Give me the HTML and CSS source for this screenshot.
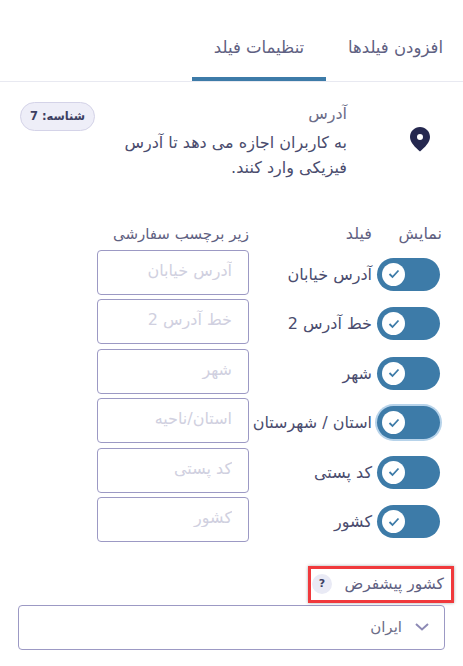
FILE: index.html
```
<!DOCTYPE html>
<html lang="fa" dir="rtl">
<head>
<meta charset="utf-8">
<title>تنظیمات فیلد</title>
<link rel="stylesheet" href="styles.css">
</head>
<body>
<nav class="tabs">
  <div class="tab">افزودن فیلدها</div>
  <div class="tab active">تنظیمات فیلد</div>
</nav>
<section class="info">
  <div class="pin">
    <svg width="20" height="25" viewBox="0 0 20 25"><path fill="#25284f" fill-rule="evenodd" d="M10 0C4.500 0 0 4.400 0 10c0 5.600 5.500 10.500 10 14.500C14.500 20.500 20 15.600 20 10 20 4.400 15.500 0 10 0Zm0 7a3 3 0 1 1 0 6 3 3 0 0 1 0-6Z"/></svg>
  </div>
  <div class="info-text">
    <div class="info-title">آدرس</div>
    <p class="info-desc">به کاربران اجازه می دهد تا آدرس فیزیکی وارد کنند.</p>
  </div>
  <div class="badge">شناسه: 7</div>
</section>
<section class="fields">
  <div class="head">
    <span class="h-show">نمایش</span>
    <span class="h-field">فیلد</span>
    <span class="h-sub">زیر برچسب سفارشی</span>
  </div>
  <div class="row">
    <span class="toggle"><span class="knob"><svg width="12" height="10" viewBox="0 0 12 10"><path d="M1.500 5l3 3 6-6.500" fill="none" stroke="#3d7ba8" stroke-width="1.800"/></svg></span></span>
    <span class="name">آدرس خیابان</span>
    <input class="sub" placeholder="آدرس خیابان">
  </div>
  <div class="row">
    <span class="toggle"><span class="knob"><svg width="12" height="10" viewBox="0 0 12 10"><path d="M1.500 5l3 3 6-6.500" fill="none" stroke="#3d7ba8" stroke-width="1.800"/></svg></span></span>
    <span class="name">خط آدرس 2</span>
    <input class="sub" placeholder="خط آدرس 2">
  </div>
  <div class="row">
    <span class="toggle"><span class="knob"><svg width="12" height="10" viewBox="0 0 12 10"><path d="M1.500 5l3 3 6-6.500" fill="none" stroke="#3d7ba8" stroke-width="1.800"/></svg></span></span>
    <span class="name">شهر</span>
    <input class="sub" placeholder="شهر">
  </div>
  <div class="row">
    <span class="toggle focus"><span class="knob"><svg width="12" height="10" viewBox="0 0 12 10"><path d="M1.500 5l3 3 6-6.500" fill="none" stroke="#3d7ba8" stroke-width="1.800"/></svg></span></span>
    <span class="name">استان / شهرستان</span>
    <input class="sub" placeholder="استان/ناحیه">
  </div>
  <div class="row">
    <span class="toggle"><span class="knob"><svg width="12" height="10" viewBox="0 0 12 10"><path d="M1.500 5l3 3 6-6.500" fill="none" stroke="#3d7ba8" stroke-width="1.800"/></svg></span></span>
    <span class="name">کد پستی</span>
    <input class="sub" placeholder="کد پستی">
  </div>
  <div class="row">
    <span class="toggle"><span class="knob"><svg width="12" height="10" viewBox="0 0 12 10"><path d="M1.500 5l3 3 6-6.500" fill="none" stroke="#3d7ba8" stroke-width="1.800"/></svg></span></span>
    <span class="name">کشور</span>
    <input class="sub" placeholder="کشور">
  </div>
</section>
<section class="country">
  <div class="label-wrap">
    <div class="label-box">
      <span class="label-text">کشور پیشفرض</span>
      <span class="help">?</span>
    </div>
  </div>
  <div class="select">
    <svg width="14" height="8" viewBox="0 0 14 8"><path d="M1 1l6 5.500L13 1" fill="none" stroke="#8d8ab5" stroke-width="2"/></svg>
    <span>ایران</span>
  </div>
</section>
</body>
</html>
```
FILE: styles.css
```
* { box-sizing: border-box; }
html, body { margin: 0; padding: 0; }
body {
  width: 463px;
  height: 666px;
  overflow: hidden;
  background: #fff;
  color: #4a4c6e;
  font-family: "DejaVu Sans", sans-serif;
  font-size: 16px;
}
.tabs {
  display: flex;
  height: 82px;
  padding-right: 20px;
  border-bottom: 1px solid #e8e9f1;
  color: #5f6182;
}
.tab {
  width: 134px;
  height: 81px;
  padding-top: 38px;
  font-size: 16.500px;
  text-align: center;
  white-space: nowrap;
  border-bottom: 4px solid transparent;
}
.tab:first-child { width: 117px; text-align: right; }
.tab.active { border-bottom-color: #3d7ba8; }
.info {
  display: flex;
  align-items: flex-start;
  height: 158px;
  padding: 20px 33px 0 20px;
}
.pin { flex: none; width: 20px; margin-top: 25px; margin-left: 63px; line-height: 0; }
.info-text { flex: none; width: 232px; }
.info-title { margin-top: 2px; color: #6c6d88; font-size: 16px; line-height: 20px; }
.info-desc { margin: 6px 0 0; color: #4a4c6e; font-size: 16px; line-height: 25px; }
.badge {
  margin-right: auto;
  width: 75px;
  height: 29px;
  border: 1px solid #d4d3e8;
  border-radius: 15px;
  background: #eeeef8;
  color: #3d3f62;
  font-size: 11.500px;
  font-weight: bold;
  line-height: 27px;
  text-align: center;
  white-space: nowrap;
}
.fields { padding-right: 23px; }
.head {
  display: flex;
  height: 23.600px;
  margin-top: -16px;
  margin-right: -2px;
  color: #5f6182;
  font-size: 16px;
  line-height: 20px;
  white-space: nowrap;
}
.h-show { flex: none; width: 70px; }
.h-field { flex: none; width: 123px; }
.h-sub { font-size: 15px; }
.row {
  display: flex;
  align-items: center;
  height: 49.500px;
  white-space: nowrap;
}
.toggle {
  flex: none;
  display: flex;
  align-items: center;
  justify-content: flex-start;
  width: 63px;
  height: 33px;
  margin-top: 4px;
  border-radius: 17px;
  background: #3d7ba8;
  direction: ltr;
}
.toggle.focus { box-shadow: 0 0 0 2px #b7d3ea; }
.knob {
  display: flex;
  align-items: center;
  justify-content: center;
  width: 23px;
  height: 23px;
  margin-left: 5px;
  border-radius: 50%;
  background: #fff;
}
.name {
  flex: none;
  width: 128px;
  margin-top: 4px;
  padding-right: 5px;
  color: #4a4c6e;
  font-size: 16px;
}
.sub {
  flex: none;
  width: 152px;
  height: 45px;
  border: 1px solid #9c99c4;
  border-radius: 4px;
  padding: 0 16px 4px;
  background: #fff;
  font-family: "DejaVu Sans", sans-serif;
  font-size: 16px;
  outline: none;
}
.sub::placeholder { color: #d0d0e0; opacity: 1; }
.country { margin-top: 21.400px; padding: 0 18px; }
.label-wrap { display: flex; }
.label-box {
  display: flex;
  align-items: center;
  width: 146px;
  height: 37px;
  margin-right: -9px;
  padding-right: 7px;
  border: 3px solid #f0393c;
  box-shadow: 0 0 3px rgba(0,0,0,.35);
  color: #5f6182;
  font-size: 15.500px;
  white-space: nowrap;
}
.help {
  width: 20px;
  height: 20px;
  margin-right: auto;
  margin-left: 1px;
  border-radius: 50%;
  background: #e9eaf5;
  color: #3d3f62;
  font-size: 11px;
  font-weight: bold;
  line-height: 20px;
  text-align: center;
}
.select {
  display: flex;
  align-items: center;
  gap: 13px;
  width: 427px;
  height: 45px;
  margin-top: 2px;
  padding-right: 15px;
  border: 1px solid #9c99c4;
  border-radius: 4px;
  color: #6c6d88;
  font-size: 15px;
}
```
